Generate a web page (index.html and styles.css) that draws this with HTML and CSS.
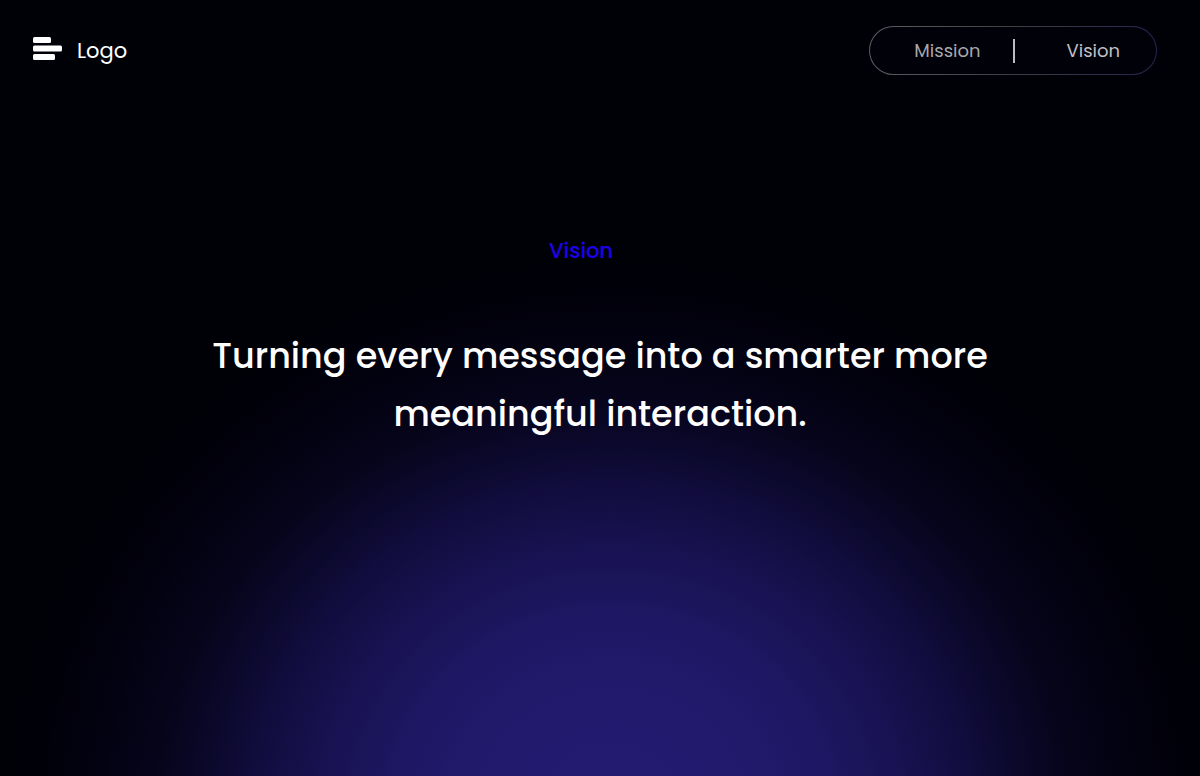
FILE: index.html
```html
<!DOCTYPE html>
<html lang="en">
	<head>
		<meta charset="utf-8">
		<meta name="viewport" content="width=device-width, initial-scale=1">
		<title>Vision</title>
		<link rel="stylesheet" href="styles.css">
	</head>
	<body>
		<header class="header">
			<a class="logo" href="#">
				<svg class="logo-icon" width="29" height="27" viewBox="0 0 29 27" fill="#fff" aria-hidden="true">
					<rect x="0" y="0" width="18" height="6" rx="1.5"/>
					<rect x="0" y="8.5" width="29" height="6" rx="1.5"/>
					<rect x="0" y="17" width="22" height="6" rx="1.5"/>
				</svg>
				Logo
			</a>
			<nav class="nav">
				<a class="nav-link" href="#mission">Mission</a>
				<span class="divider"></span>
				<a class="nav-link active" href="#vision">Vision</a>
			</nav>
		</header>
		<main class="hero" id="vision">
			<p class="label">Vision</p>
			<h1 class="title">Turning every message into a smarter more meaningful interaction.</h1>
		</main>
	</body>
</html>
```

FILE: styles.css
```css
* {
	box-sizing: border-box;
}

body {
	margin: 0;
	min-height: 100vh;
	color: #fff;
	font-family: Poppins, Inter, sans-serif;
	background: #000007 radial-gradient(ellipse 50% 71% at 51% 105%,
		#241b72 0%,
		#221a6d 22%,
		#1e1763 36%,
		#191354 47%,
		#120d3f 59%,
		#0b082b 68%,
		#060419 77%,
		#02010f 88%,
		#000007 100%) no-repeat;
}

a {
	color: inherit;
	text-decoration: none;
}

.header {
	display: flex;
	justify-content: space-between;
	align-items: center;
	padding: 26px 43px 0 33px;
}

.logo {
	display: flex;
	align-items: center;
	gap: 15px;
	font-size: 21px;
}

.nav {
	display: flex;
	align-items: center;
	gap: 32px;
	height: 49px;
	padding: 0 36px 0 44px;
	border: 1px solid transparent;
	border-radius: 25px;
	background:
		linear-gradient(#010109, #010109) padding-box,
		linear-gradient(100deg, #5e5e63, #3e3e43 50%, #27234f) border-box;
}

.nav-link {
	color: #a8a8ab;
	font-size: 18px;
}

.nav-link.active {
	color: #c0c0c3;
}

.divider {
	width: 2px;
	height: 24px;
	margin-right: 20px;
	background: #bcbcc0;
}

.hero {
	display: flex;
	flex-direction: column;
	align-items: center;
	padding: 160px 20px 0;
}

.label {
	margin: 0 38px 60px 0;
	color: #1e00ec;
	font-size: 21px;
	font-weight: 500;
	line-height: 32px;
}

.title {
	max-width: 840px;
	margin: 0;
	font-size: 35px;
	font-weight: 500;
	line-height: 58px;
	text-align: center;
}
```
